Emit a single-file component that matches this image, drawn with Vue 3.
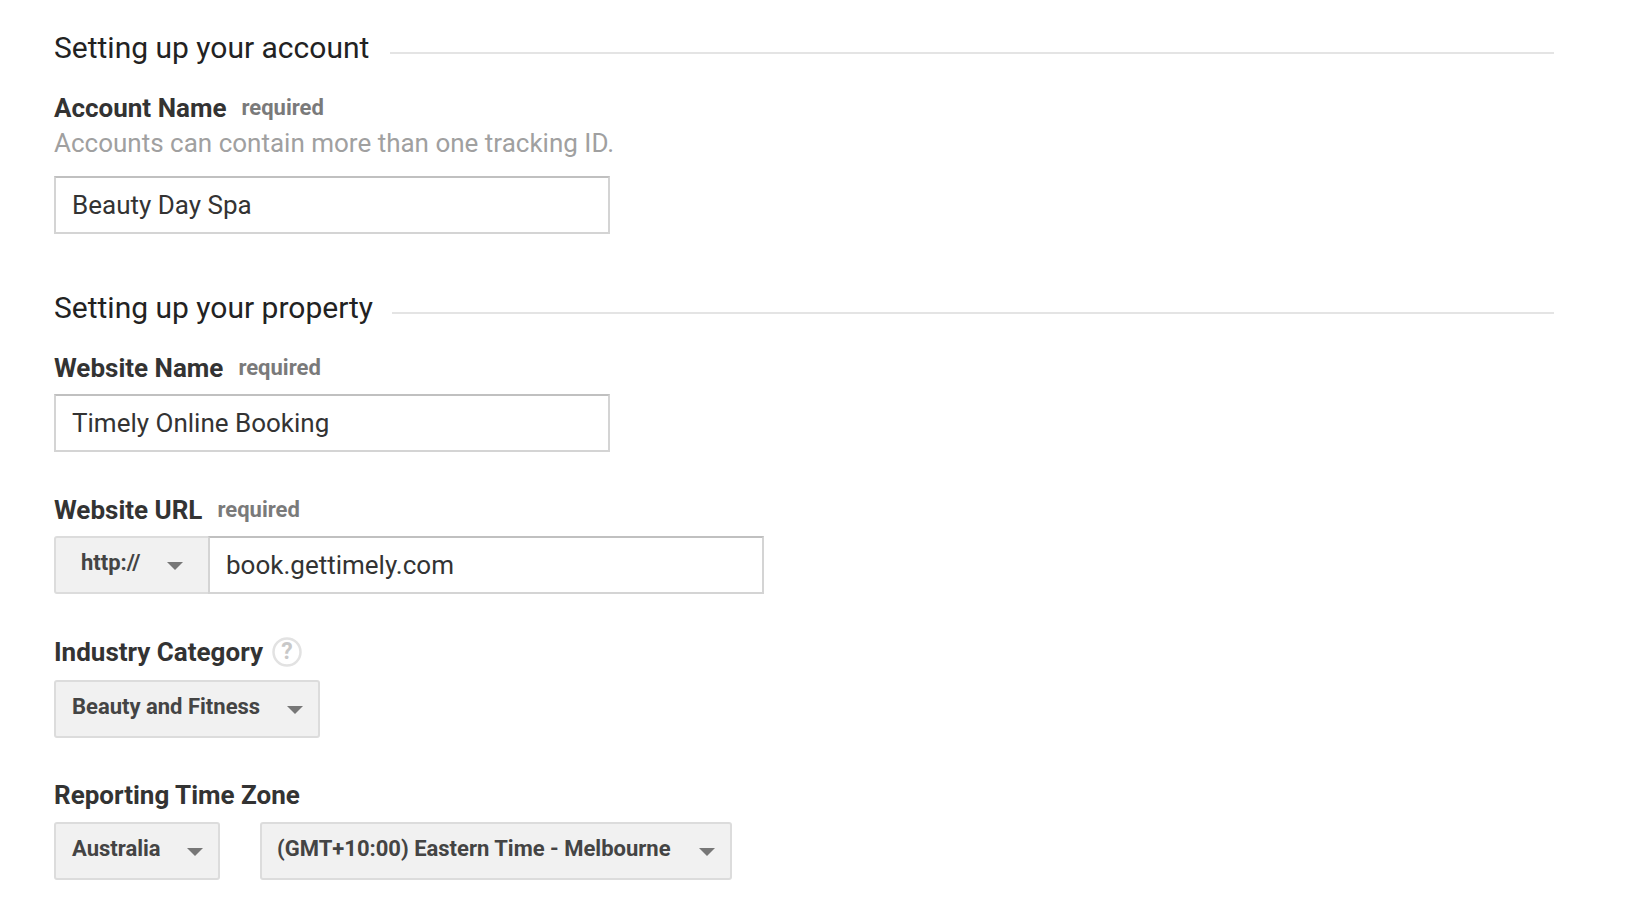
<template>
  <div class="page">
    <section>
      <div class="heading"><h2>Setting up your account</h2><span class="rule"></span></div>
      <div class="field first">
        <div class="label">Account Name<span class="req">required</span></div>
        <div class="help">Accounts can contain more than one tracking ID.</div>
        <div class="input name account-input">Beauty Day Spa</div>
      </div>
    </section>

    <section class="second">
      <div class="heading"><h2>Setting up your property</h2><span class="rule"></span></div>
      <div class="field first">
        <div class="label">Website Name<span class="req">required</span></div>
        <div class="input name">Timely Online Booking</div>
      </div>
      <div class="field url">
        <div class="label">Website URL<span class="req">required</span></div>
        <div class="url-group">
          <div class="select proto"><span>http://</span><span class="caret"></span></div>
          <div class="input url-input">book.gettimely.com</div>
        </div>
      </div>
      <div class="field industry">
        <div class="label">
          Industry Category
          <svg class="help-icon" width="30" height="30" viewBox="0 0 30 30">
            <circle cx="15" cy="15" r="13.5" fill="#fff" stroke="#e2e2e2" stroke-width="2.5" />
            <text x="15" y="22" text-anchor="middle" class="q">?</text>
          </svg>
        </div>
        <div class="select cat"><span>Beauty and Fitness</span><span class="caret"></span></div>
      </div>
      <div class="field zone">
        <div class="label">Reporting Time Zone</div>
        <div class="row">
          <div class="select country"><span>Australia</span><span class="caret"></span></div>
          <div class="select tz"><span>(GMT+10:00) Eastern Time - Melbourne</span><span class="caret"></span></div>
        </div>
      </div>
    </section>
  </div>
</template>

<script setup>
</script>

<style>
html, body { background: #fff; }
</style>

<style scoped>
.page {
  box-sizing: border-box;
  width: 1632px;
  height: 910px;
  overflow: hidden;
  padding: 29px 78px 0 54px;
  font-family: Roboto, "Liberation Sans", sans-serif;
  color: #333;
}

.heading {
  display: flex;
  align-items: center;
  gap: 21px;
  height: 37px;
}
.heading h2 {
  margin: 0;
  font-size: 30px;
  font-weight: 400;
  color: #222;
  white-space: nowrap;
}
.rule {
  flex: 1;
  height: 2px;
  margin-top: 10px;
  background: #e4e4e4;
}

.second { margin-top: 55px; }
.second .heading { gap: 19px; }

.first { margin-top: 27px; }

.label {
  display: flex;
  align-items: center;
  height: 30px;
  font-size: 26px;
  font-weight: 700;
  line-height: 30px;
  white-space: nowrap;
}
.req {
  margin-left: 15px;
  font-size: 22px;
  font-weight: 700;
  color: #7a7a7a;
}
.help {
  margin-top: 5px;
  font-size: 26px;
  line-height: 30px;
  color: #a0a0a0;
}

.input {
  box-sizing: border-box;
  height: 58px;
  padding: 0 16px;
  display: flex;
  align-items: center;
  font-size: 26px;
  background: #fff;
  border: 2px solid #d4d4d4;
  border-top-color: #c0c0c0;
  color: #333;
}
.name {
  width: 556px;
  margin-top: 11px;
}
.account-input { margin-top: 18px; }

.url { margin-top: 43px; }
.url-group {
  display: flex;
  width: 710px;
  margin-top: 11px;
}
.url-input {
  flex: 1;
  margin-left: -2px;
}

.select {
  box-sizing: border-box;
  height: 58px;
  display: flex;
  align-items: center;
  justify-content: space-between;
  padding: 0 15px 0 16px;
  font-size: 22px;
  font-weight: 700;
  color: #444;
  background: #f1f1f1;
  border: 2px solid #dcdcdc;
  border-radius: 3px;
  white-space: nowrap;
}
.select span:first-child { margin-top: -5px; }
.proto {
  width: 156px;
  padding: 0 25px 0 25px;
  border-radius: 3px 0 0 3px;
}
.caret {
  width: 0;
  height: 0;
  margin-top: 2px;
  border-left: 8px solid transparent;
  border-right: 8px solid transparent;
  border-top: 8px solid #777;
}

.industry { margin-top: 43px; }
.help-icon { margin-left: 9px; }
.q {
  font-size: 23px;
  font-weight: 700;
  fill: #c8c8c8;
  font-family: Roboto, sans-serif;
}
.cat {
  width: 266px;
  margin-top: 13px;
}

.zone { margin-top: 42px; }
.row {
  display: flex;
  gap: 40px;
  margin-top: 12px;
}
.country { width: 166px; }
.tz {
  width: 472px;
  padding-left: 15px;
}
</style>
